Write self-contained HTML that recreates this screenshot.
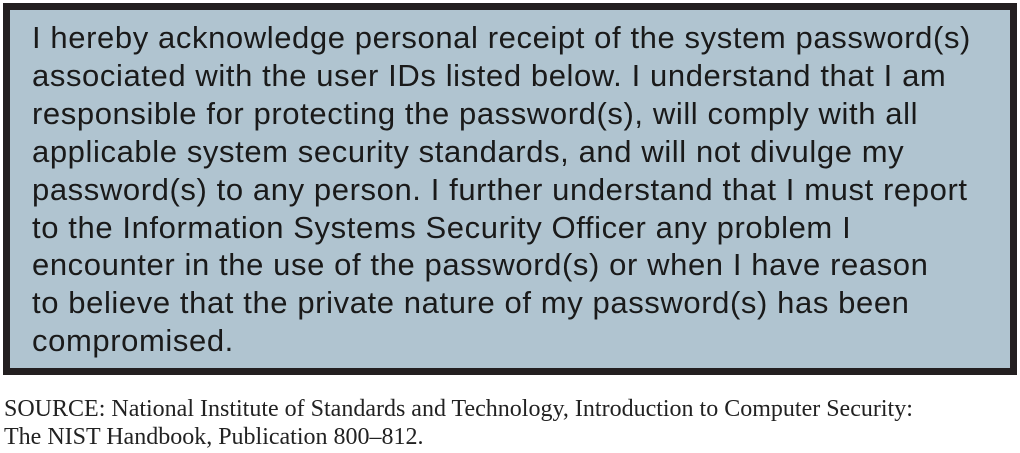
<!DOCTYPE html>
<html><head><style>
body{margin:0;width:1020px;height:453px;background:#fff;position:relative;overflow:hidden}
.box{position:absolute;left:3px;top:3px;width:1000px;height:358px;border:7px solid #231f20;background:#b0c4d0}
.t{position:absolute;left:22px;top:9px;font-family:"Liberation Sans",sans-serif;font-size:31px;line-height:37.9px;color:#1a1a1a;white-space:nowrap;letter-spacing:0.6px}
.s{position:absolute;left:4px;top:395px;font-family:"Liberation Serif",serif;font-size:24px;line-height:28px;color:#222;white-space:nowrap}
</style></head><body>
<div class="box"><div class="t">I hereby acknowledge personal receipt of the system password(s)<br>associated with the user IDs listed below. I understand that I am<br>responsible for protecting the password(s), will comply with all<br>applicable system security standards, and will not divulge my<br>password(s) to any person. I further understand that I must report<br>to the Information Systems Security Officer any problem I<br>encounter in the use of the password(s) or when I have reason<br>to believe that the private nature of my password(s) has been<br>compromised.</div></div>
<div class="s">SOURCE: National Institute of Standards and Technology, Introduction to Computer Security:<br>The NIST Handbook, Publication 800–812.</div>
</body></html>
